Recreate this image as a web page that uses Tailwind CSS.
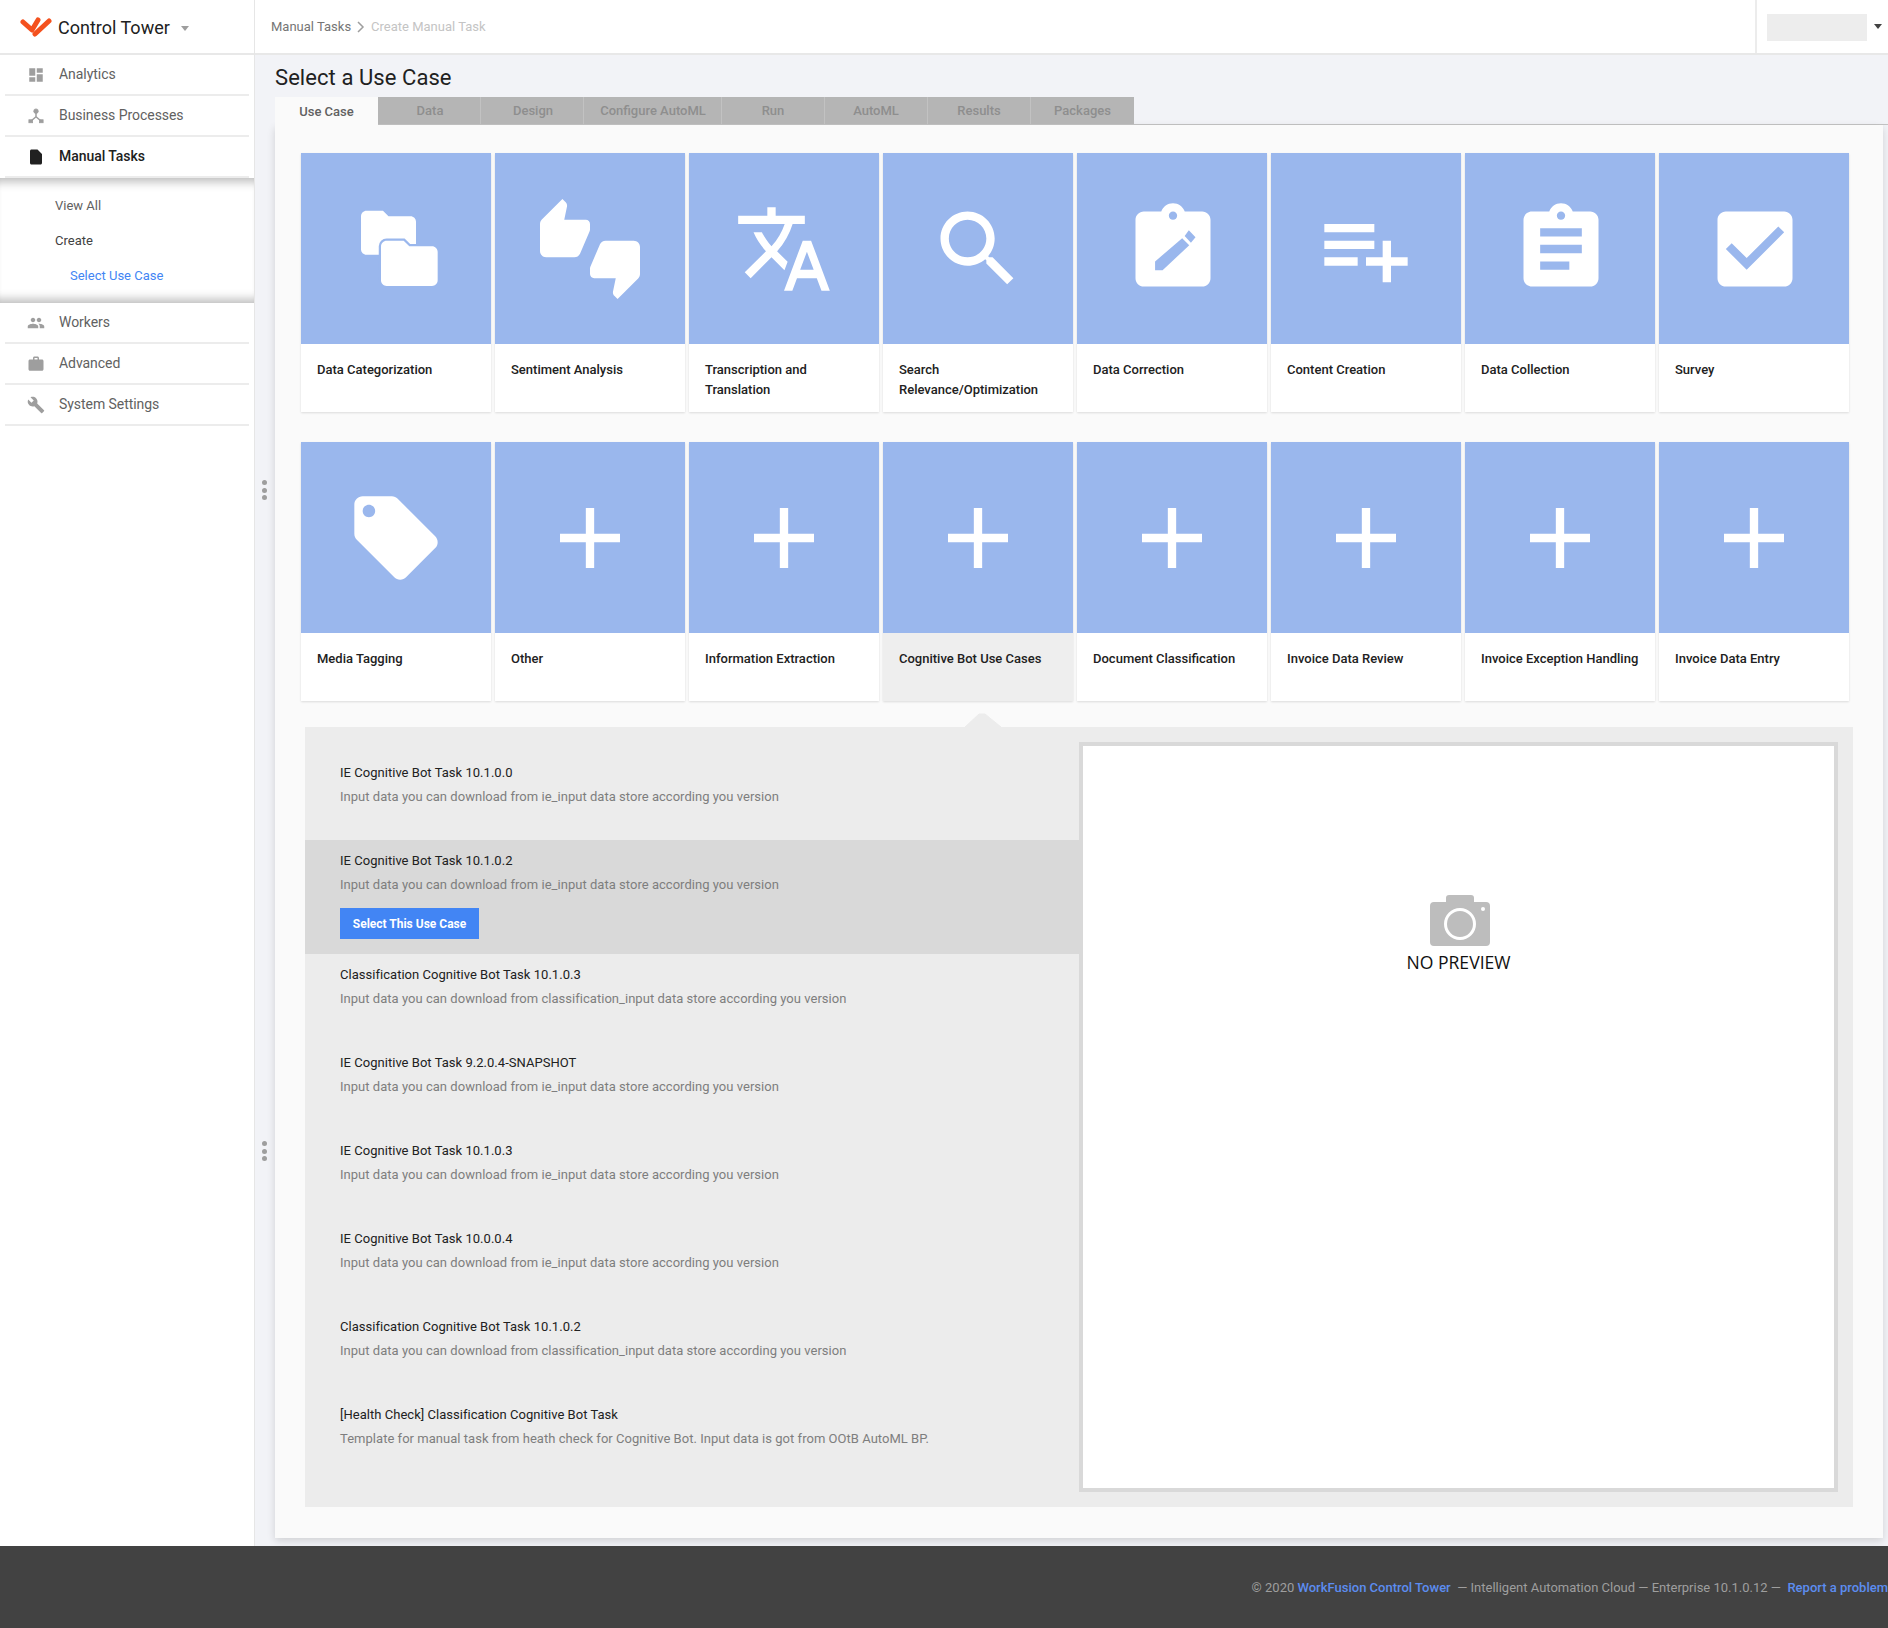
<!DOCTYPE html>
<html lang="en">
  <head>
    <meta charset="UTF-8" />
    <title>Select a Use Case</title>
    <script src="https://cdn.jsdelivr.net/npm/@tailwindcss/browser@4"></script>
  </head>
  <body class="w-[1888px] h-[1628px] overflow-hidden bg-[#f2f3f7] font-['Roboto',sans-serif] text-[13px] text-[#212121]">
    <div class="flex h-[1546px]">
      <!-- Sidebar -->
      <aside class="w-[255px] shrink-0 bg-white border-r border-[#e6e6e6]">
        <div class="h-[55px] border-b-2 border-[#e8e8e8] flex items-center pl-[20px]">
          <svg class="w-[32px] h-[22px] mt-[3px]" viewBox="0 0 32 22" fill="none" stroke="#f4511e" stroke-width="5" stroke-linecap="round" stroke-linejoin="round">
            <path d="M3 5 L12 13 L18 3" />
            <path d="M15 17 L29 4" />
          </svg>
          <span class="ml-[6px] mt-[2px] text-[18px] leading-none text-[#212121]">Control Tower</span>
          <span class="ml-[11px] mt-[3px] w-0 h-0 border-x-[4.5px] border-x-transparent border-t-[5px] border-t-[#9e9e9e]"></span>
        </div>

        <nav class="text-[14px] tracking-[-0.05px] text-[#616161]">
          <a class="mx-[5px] h-[41px] flex items-center border-b-2 border-[#ececec]">
            <svg class="w-[18px] h-[18px] ml-[22px] mr-[14px] fill-[#9e9e9e]" viewBox="0 0 24 24"><path d="M3 13h8V3H3v10zm0 8h8v-6H3v6zm10 0h8V11h-8v10zm0-18v6h8V3h-8z" /></svg>
            Analytics
          </a>
          <a class="mx-[5px] h-[41px] flex items-center border-b-2 border-[#ececec]">
            <svg class="w-[18px] h-[18px] ml-[22px] mr-[14px]" viewBox="0 0 24 24" fill="#9e9e9e" stroke="#9e9e9e">
              <circle cx="12" cy="5.5" r="3" />
              <path d="M12 7v6M12 13l-7 6M12 13l7 6" fill="none" stroke-width="2" />
              <rect x="2.5" y="17" width="5" height="4" />
              <rect x="16.5" y="17" width="5" height="4" />
            </svg>
            Business Processes
          </a>
          <a class="mx-[5px] h-[41px] flex items-center border-b-2 border-[#ececec] font-medium text-[#212121]">
            <svg class="w-[18px] h-[18px] ml-[22px] mr-[14px] fill-[#212121]" viewBox="0 0 24 24"><path d="M6 2c-1.1 0-1.99.9-1.99 2L4 20c0 1.1.89 2 1.99 2H18c1.1 0 2-.9 2-2V8l-6-6H6z" /></svg>
            Manual Tasks
          </a>
          <div class="h-[125px] flex flex-col shadow-[inset_0_12px_10px_-8px_rgba(0,0,0,0.26),inset_0_-12px_10px_-8px_rgba(0,0,0,0.26)] text-[13px] tracking-normal pt-[10px]">
            <a class="h-[35px] flex items-center pl-[55px] text-[#616161]">View All</a>
            <a class="h-[35px] flex items-center pl-[55px] text-[#424242]">Create</a>
            <a class="h-[35px] flex items-center pl-[70px] text-[#4285f4]">Select Use Case</a>
          </div>
          <a class="mx-[5px] h-[41px] flex items-center border-b-2 border-[#ececec]">
            <svg class="w-[18px] h-[18px] ml-[22px] mr-[14px] fill-[#9e9e9e]" viewBox="0 0 24 24"><path d="M16 11c1.66 0 2.99-1.34 2.99-3S17.66 5 16 5c-1.66 0-3 1.34-3 3s1.34 3 3 3zm-8 0c1.66 0 2.99-1.34 2.99-3S9.66 5 8 5C6.34 5 5 6.34 5 8s1.34 3 3 3zm0 2c-2.33 0-7 1.17-7 3.5V19h14v-2.5c0-2.33-4.67-3.5-7-3.5zm8 0c-.29 0-.62.02-.97.05 1.16.84 1.97 1.97 1.97 3.45V19h6v-2.5c0-2.33-4.67-3.5-7-3.5z" /></svg>
            Workers
          </a>
          <a class="mx-[5px] h-[41px] flex items-center border-b-2 border-[#ececec]">
            <svg class="w-[18px] h-[18px] ml-[22px] mr-[14px] fill-[#9e9e9e]" viewBox="0 0 24 24"><path d="M20 6h-4V4c0-1.11-.89-2-2-2h-4c-1.11 0-2 .89-2 2v2H4c-1.11 0-1.99.89-1.99 2L2 19c0 1.11.89 2 2 2h16c1.11 0 2-.89 2-2V8c0-1.11-.89-2-2-2zm-6 0h-4V4h4v2z" /></svg>
            Advanced
          </a>
          <a class="mx-[5px] h-[41px] flex items-center border-b-2 border-[#ececec]">
            <svg class="w-[18px] h-[18px] ml-[22px] mr-[14px] fill-[#9e9e9e]" viewBox="0 0 24 24"><path d="M22.7 19l-9.1-9.1c.9-2.3.4-5-1.5-6.9-2-2-5-2.4-7.4-1.3L9 6 6 9 1.6 4.7C.4 7.1.9 10.1 2.9 12.1c1.9 1.9 4.6 2.4 6.9 1.5l9.1 9.1c.4.4 1 .4 1.4 0l2.3-2.3c.5-.4.5-1.1.1-1.4z" /></svg>
            System Settings
          </a>
        </nav>
      </aside>

      <div class="relative flex-1 flex flex-col min-w-0">
        <!-- Top bar -->
        <header class="h-[55px] shrink-0 bg-white border-b-2 border-[#e8e8e8] flex items-center">
          <div class="pl-[16px] flex items-center flex-1">
            <span class="text-[#757575]">Manual Tasks</span>
            <svg class="w-[8px] h-[12px] mx-[6px]" viewBox="0 0 8 12" fill="none" stroke="#9e9e9e" stroke-width="1.5"><path d="M1 1l5 5-5 5" /></svg>
            <span class="text-[#c4c4c4]">Create Manual Task</span>
          </div>
          <div class="w-[133px] h-full border-l-2 border-[#ececec] flex items-center pl-[10px]">
            <div class="w-[100px] h-[27px] bg-[#ededed] mt-[2px]"></div>
            <span class="ml-[7px] w-0 h-0 border-x-[4px] border-x-transparent border-t-[5px] border-t-[#424242]"></span>
          </div>
        </header>

        <!-- Drag handles -->
        <div class="absolute left-[7px] top-[480px] flex flex-col gap-[2.5px]">
          <span class="w-[5px] h-[5px] rounded-full bg-[#9e9e9e]"></span>
          <span class="w-[5px] h-[5px] rounded-full bg-[#9e9e9e]"></span>
          <span class="w-[5px] h-[5px] rounded-full bg-[#9e9e9e]"></span>
        </div>
        <div class="absolute left-[7px] top-[1141px] flex flex-col gap-[2.5px]">
          <span class="w-[5px] h-[5px] rounded-full bg-[#9e9e9e]"></span>
          <span class="w-[5px] h-[5px] rounded-full bg-[#9e9e9e]"></span>
          <span class="w-[5px] h-[5px] rounded-full bg-[#9e9e9e]"></span>
        </div>

        <main class="flex-1 pl-[20px]">
          <h1 class="h-[42px] pt-[4px] flex items-center text-[22px] tracking-[0.07px] leading-none text-[#212121]">Select a Use Case</h1>

          <!-- Tabs -->
          <div class="flex h-[28px] border-b border-[#c4c4c4] text-[13px] font-medium">
            <div class="w-[103px] h-[28px] pt-[1px] bg-[#fafafa] flex items-center justify-center text-[#616161]">Use Case</div>
            <div class="w-[103px] pt-[1px] pl-[2px] bg-[#b5b5b5] border-r border-[#c2c2c2] flex items-center justify-center text-[#8e8e8e]">Data</div>
            <div class="w-[103px] pt-[1px] pl-[2px] bg-[#b5b5b5] border-r border-[#c2c2c2] flex items-center justify-center text-[#8e8e8e]">Design</div>
            <div class="w-[138px] pt-[1px] pl-[1px] bg-[#b5b5b5] border-r border-[#c2c2c2] flex items-center justify-center text-[#8e8e8e]">Configure AutoML</div>
            <div class="w-[103px] pt-[1px] bg-[#b5b5b5] border-r border-[#c2c2c2] flex items-center justify-center text-[#8e8e8e]">Run</div>
            <div class="w-[103px] pt-[1px] bg-[#b5b5b5] border-r border-[#c2c2c2] flex items-center justify-center text-[#8e8e8e]">AutoML</div>
            <div class="w-[103px] pt-[1px] bg-[#b5b5b5] border-r border-[#c2c2c2] flex items-center justify-center text-[#8e8e8e]">Results</div>
            <div class="w-[103px] pt-[1px] bg-[#b5b5b5] flex items-center justify-center text-[#8e8e8e]">Packages</div>
          </div>

          <!-- Panel -->
          <section class="w-[1608px] h-[1413px] bg-[#fafafa] pt-[28px] pl-[26px] shadow-[0_3px_8px_rgba(0,0,0,0.14)]">
            <div class="w-[1548px] grid grid-cols-8 gap-x-[4px] gap-y-[30px] font-medium">
              <div class="bg-white h-[259px] shadow-[0_1px_2px_rgba(0,0,0,0.12)]">
                <div class="h-[191px] bg-[#9ab7ed] flex items-center justify-center">
                  <svg class="w-[100px] h-[100px]" viewBox="0 0 24 24" fill="#fff">
                    <path transform="translate(2.28 .16) scale(.66)" d="M10 4H4c-1.1 0-1.99.9-1.99 2L2 18c0 1.1.9 2 2 2h16c1.1 0 2-.9 2-2V8c0-1.1-.9-2-2-2h-8l-2-2z" />
                    <path transform="translate(7.04 7.28) scale(.68)" stroke="#9ab7ed" stroke-width="1.6" paint-order="stroke" d="M10 4H4c-1.1 0-1.99.9-1.99 2L2 18c0 1.1.9 2 2 2h16c1.1 0 2-.9 2-2V8c0-1.1-.9-2-2-2h-8l-2-2z" />
                  </svg>
                </div>
                <p class="px-[16px] pt-[16px] leading-[20px]">Data Categorization</p>
              </div>
              <div class="bg-white h-[259px] shadow-[0_1px_2px_rgba(0,0,0,0.12)]">
                <div class="h-[191px] bg-[#9ab7ed] flex items-center justify-center">
                  <svg class="w-[100px] h-[100px] fill-white" viewBox="0 0 24 24"><path d="M12 6c0-.55-.45-1-1-1H5.82l.66-3.18.02-.23c0-.31-.13-.59-.33-.8L5.38 0 .44 4.94C.17 5.21 0 5.59 0 6v6.5c0 .83.67 1.5 1.5 1.5h6.75c.62 0 1.15-.38 1.38-.91l2.26-5.29c.07-.17.11-.36.11-.55V6zm10.5 4h-6.75c-.62 0-1.15.38-1.38.91l-2.26 5.29c-.07.17-.11.36-.11.55V18c0 .55.45 1 1 1h5.18l-.66 3.18-.02.24c0 .31.13.59.33.8l.79.78 4.94-4.94c.27-.27.44-.65.44-1.06v-6.5c0-.83-.67-1.5-1.5-1.5z" /></svg>
                </div>
                <p class="px-[16px] pt-[16px] leading-[20px]">Sentiment Analysis</p>
              </div>
              <div class="bg-white h-[259px] shadow-[0_1px_2px_rgba(0,0,0,0.12)]">
                <div class="h-[191px] bg-[#9ab7ed] flex items-center justify-center">
                  <svg class="w-[100px] h-[100px] fill-white" viewBox="0 0 24 24"><path d="M12.87 15.07l-2.54-2.51.03-.03c1.74-1.94 2.98-4.17 3.71-6.53H17V4h-7V2H8v2H1v1.99h11.17C11.5 7.92 10.44 9.75 9 11.35 8.07 10.32 7.3 9.19 6.69 8h-2c.73 1.63 1.73 3.17 2.98 4.56l-5.09 5.02L4 19l5-5 3.11 3.11.76-2.04zM18.5 10h-2L12 22h2l1.12-3h4.75L21 22h2l-4.5-12zm-2.62 7l1.62-4.33L19.12 17h-3.24z" /></svg>
                </div>
                <p class="px-[16px] pt-[16px] leading-[20px]">Transcription and Translation</p>
              </div>
              <div class="bg-white h-[259px] shadow-[0_1px_2px_rgba(0,0,0,0.12)]">
                <div class="h-[191px] bg-[#9ab7ed] flex items-center justify-center">
                  <svg class="w-[100px] h-[100px] fill-white" viewBox="0 0 24 24"><path d="M15.5 14h-.79l-.28-.27C15.41 12.59 16 11.11 16 9.5 16 5.91 13.09 3 9.5 3S3 5.91 3 9.5 5.91 16 9.5 16c1.61 0 3.09-.59 4.23-1.57l.27.28v.79l5 4.99L20.49 19l-4.99-5zm-6 0C7.01 14 5 11.99 5 9.5S7.01 5 9.5 5 14 7.01 14 9.5 11.99 14 9.5 14z" /></svg>
                </div>
                <p class="px-[16px] pt-[16px] leading-[20px]">Search Relevance/Optimization</p>
              </div>
              <div class="bg-white h-[259px] shadow-[0_1px_2px_rgba(0,0,0,0.12)]">
                <div class="h-[191px] bg-[#9ab7ed] flex items-center justify-center">
                  <svg class="ml-[1px] w-[100px] h-[100px]" viewBox="0 0 24 24">
                    <path fill="#fff" d="M19 3h-4.18C14.4 1.84 13.3 1 12 1c-1.3 0-2.4.84-2.82 2H5c-1.1 0-2 .9-2 2v14c0 1.1.9 2 2 2h14c1.1 0 2-.9 2-2V5c0-1.1-.9-2-2-2zm-7 0c.55 0 1 .45 1 1s-.45 1-1 1-1-.45-1-1 .45-1 1-1z" />
                    <path fill="#9ab7ed" d="M7.7 17.1V15l6.5-5.6 1.7 1.7-6.4 6zM14.8 8.9l1-1.4 1.6 1.7-1.1 1.3z" />
                  </svg>
                </div>
                <p class="px-[16px] pt-[16px] leading-[20px]">Data Correction</p>
              </div>
              <div class="bg-white h-[259px] shadow-[0_1px_2px_rgba(0,0,0,0.12)]">
                <div class="h-[191px] bg-[#9ab7ed] flex items-center justify-center">
                  <svg class="w-[100px] h-[100px] fill-white" viewBox="0 0 24 24"><path d="M14 10H2v2h12v-2zm0-4H2v2h12V6zm4 8v-4h-2v4h-4v2h4v4h2v-4h4v-2h-4zM2 16h8v-2H2v2z" /></svg>
                </div>
                <p class="px-[16px] pt-[16px] leading-[20px]">Content Creation</p>
              </div>
              <div class="bg-white h-[259px] shadow-[0_1px_2px_rgba(0,0,0,0.12)]">
                <div class="h-[191px] bg-[#9ab7ed] flex items-center justify-center">
                  <svg class="ml-[1px] w-[100px] h-[100px] fill-white" viewBox="0 0 24 24"><path d="M19 3h-4.18C14.4 1.84 13.3 1 12 1c-1.3 0-2.4.84-2.82 2H5c-1.1 0-2 .9-2 2v14c0 1.1.9 2 2 2h14c1.1 0 2-.9 2-2V5c0-1.1-.9-2-2-2zm-7 0c.55 0 1 .45 1 1s-.45 1-1 1-1-.45-1-1 .45-1 1-1zm2 14H7v-2h7v2zm3-4H7v-2h10v2zm0-4H7V7h10v2z" /></svg>
                </div>
                <p class="px-[16px] pt-[16px] leading-[20px]">Data Collection</p>
              </div>
              <div class="bg-white h-[259px] shadow-[0_1px_2px_rgba(0,0,0,0.12)]">
                <div class="h-[191px] bg-[#9ab7ed] flex items-center justify-center">
                  <svg class="ml-[1px] w-[100px] h-[100px] fill-white" viewBox="0 0 24 24"><path d="M19 3H5c-1.1 0-2 .9-2 2v14c0 1.1.9 2 2 2h14c1.1 0 2-.9 2-2V5c0-1.1-.9-2-2-2zm-9 14l-5-5 1.41-1.41L10 14.17l7.59-7.59L19 8l-9 9z" /></svg>
                </div>
                <p class="px-[16px] pt-[16px] leading-[20px]">Survey</p>
              </div>

              <div class="bg-white h-[259px] shadow-[0_1px_2px_rgba(0,0,0,0.12)]">
                <div class="h-[191px] bg-[#9ab7ed] flex items-center justify-center">
                  <svg class="w-[100px] h-[100px] fill-white" viewBox="0 0 24 24"><path d="M21.41 11.58l-9-9C12.05 2.22 11.55 2 11 2H4c-1.1 0-2 .9-2 2v7c0 .55.22 1.05.59 1.42l9 9c.36.36.86.58 1.41.58.55 0 1.05-.22 1.41-.59l7-7c.37-.36.59-.86.59-1.41 0-.55-.23-1.06-.59-1.42zM5.5 7C4.67 7 4 6.33 4 5.5S4.67 4 5.5 4 7 4.67 7 5.5 6.33 7 5.5 7z" /></svg>
                </div>
                <p class="px-[16px] pt-[16px] leading-[20px]">Media Tagging</p>
              </div>
              <div class="bg-white h-[259px] shadow-[0_1px_2px_rgba(0,0,0,0.12)]">
                <div class="h-[191px] bg-[#9ab7ed] flex items-center justify-center">
                  <svg class="w-[100px] h-[100px] fill-white" viewBox="0 0 24 24"><path d="M19.2 13H13v6.2h-2V13H4.8v-2H11V4.8h2V11h6.2v2z" /></svg>
                </div>
                <p class="px-[16px] pt-[16px] leading-[20px]">Other</p>
              </div>
              <div class="bg-white h-[259px] shadow-[0_1px_2px_rgba(0,0,0,0.12)]">
                <div class="h-[191px] bg-[#9ab7ed] flex items-center justify-center">
                  <svg class="w-[100px] h-[100px] fill-white" viewBox="0 0 24 24"><path d="M19.2 13H13v6.2h-2V13H4.8v-2H11V4.8h2V11h6.2v2z" /></svg>
                </div>
                <p class="px-[16px] pt-[16px] leading-[20px]">Information Extraction</p>
              </div>
              <div class="bg-[#eeeeee] h-[259px] shadow-[0_1px_2px_rgba(0,0,0,0.12)]">
                <div class="h-[191px] bg-[#9ab7ed] flex items-center justify-center">
                  <svg class="w-[100px] h-[100px] fill-white" viewBox="0 0 24 24"><path d="M19.2 13H13v6.2h-2V13H4.8v-2H11V4.8h2V11h6.2v2z" /></svg>
                </div>
                <p class="px-[16px] pt-[16px] leading-[20px]">Cognitive Bot Use Cases</p>
              </div>
              <div class="bg-white h-[259px] shadow-[0_1px_2px_rgba(0,0,0,0.12)]">
                <div class="h-[191px] bg-[#9ab7ed] flex items-center justify-center">
                  <svg class="w-[100px] h-[100px] fill-white" viewBox="0 0 24 24"><path d="M19.2 13H13v6.2h-2V13H4.8v-2H11V4.8h2V11h6.2v2z" /></svg>
                </div>
                <p class="px-[16px] pt-[16px] leading-[20px]">Document Classification</p>
              </div>
              <div class="bg-white h-[259px] shadow-[0_1px_2px_rgba(0,0,0,0.12)]">
                <div class="h-[191px] bg-[#9ab7ed] flex items-center justify-center">
                  <svg class="w-[100px] h-[100px] fill-white" viewBox="0 0 24 24"><path d="M19.2 13H13v6.2h-2V13H4.8v-2H11V4.8h2V11h6.2v2z" /></svg>
                </div>
                <p class="px-[16px] pt-[16px] leading-[20px]">Invoice Data Review</p>
              </div>
              <div class="bg-white h-[259px] shadow-[0_1px_2px_rgba(0,0,0,0.12)]">
                <div class="h-[191px] bg-[#9ab7ed] flex items-center justify-center">
                  <svg class="w-[100px] h-[100px] fill-white" viewBox="0 0 24 24"><path d="M19.2 13H13v6.2h-2V13H4.8v-2H11V4.8h2V11h6.2v2z" /></svg>
                </div>
                <p class="px-[16px] pt-[16px] leading-[20px]">Invoice Exception Handling</p>
              </div>
              <div class="bg-white h-[259px] shadow-[0_1px_2px_rgba(0,0,0,0.12)]">
                <div class="h-[191px] bg-[#9ab7ed] flex items-center justify-center">
                  <svg class="w-[100px] h-[100px] fill-white" viewBox="0 0 24 24"><path d="M19.2 13H13v6.2h-2V13H4.8v-2H11V4.8h2V11h6.2v2z" /></svg>
                </div>
                <p class="px-[16px] pt-[16px] leading-[20px]">Invoice Data Entry</p>
              </div>
            </div>

            <!-- Use case list and preview -->
            <div class="relative mt-[26px] ml-[4px] w-[1548px] h-[780px] bg-[#ececec] flex">
              <svg class="absolute left-[659px] -top-[14px] w-[38px] h-[14px]" viewBox="0 0 38 14" fill="#ececec" stroke="#ececec" stroke-linejoin="round"><path d="M1 14 L15 1 H21 L37 14 Z" /></svg>
              <div class="w-[774px] pt-[25px] tracking-[0.03px]">
                <div class="h-[88px] pl-[35px] pt-[11px]">
                  <p class="leading-[20px]">IE Cognitive Bot Task 10.1.0.0</p>
                  <p class="mt-[4px] leading-[20px] text-[#7e7e7e]">Input data you can download from ie_input data store according you version</p>
                </div>
                <div class="h-[114px] pl-[35px] pt-[11px] bg-[#d9d9d9]">
                  <p class="leading-[20px]">IE Cognitive Bot Task 10.1.0.2</p>
                  <p class="mt-[4px] leading-[20px] text-[#7e7e7e]">Input data you can download from ie_input data store according you version</p>
                  <button class="mt-[13px] w-[139px] h-[31px] bg-[#4285f4] text-white text-[12px] tracking-normal font-bold">Select This Use Case</button>
                </div>
                <div class="h-[88px] pl-[35px] pt-[11px]">
                  <p class="leading-[20px]">Classification Cognitive Bot Task 10.1.0.3</p>
                  <p class="mt-[4px] leading-[20px] text-[#7e7e7e]">Input data you can download from classification_input data store according you version</p>
                </div>
                <div class="h-[88px] pl-[35px] pt-[11px]">
                  <p class="leading-[20px]">IE Cognitive Bot Task 9.2.0.4-SNAPSHOT</p>
                  <p class="mt-[4px] leading-[20px] text-[#7e7e7e]">Input data you can download from ie_input data store according you version</p>
                </div>
                <div class="h-[88px] pl-[35px] pt-[11px]">
                  <p class="leading-[20px]">IE Cognitive Bot Task 10.1.0.3</p>
                  <p class="mt-[4px] leading-[20px] text-[#7e7e7e]">Input data you can download from ie_input data store according you version</p>
                </div>
                <div class="h-[88px] pl-[35px] pt-[11px]">
                  <p class="leading-[20px]">IE Cognitive Bot Task 10.0.0.4</p>
                  <p class="mt-[4px] leading-[20px] text-[#7e7e7e]">Input data you can download from ie_input data store according you version</p>
                </div>
                <div class="h-[88px] pl-[35px] pt-[11px]">
                  <p class="leading-[20px]">Classification Cognitive Bot Task 10.1.0.2</p>
                  <p class="mt-[4px] leading-[20px] text-[#7e7e7e]">Input data you can download from classification_input data store according you version</p>
                </div>
                <div class="h-[88px] pl-[35px] pt-[11px]">
                  <p class="leading-[20px]">[Health Check] Classification Cognitive Bot Task</p>
                  <p class="mt-[4px] leading-[20px] text-[#7e7e7e]">Template for manual task from heath check for Cognitive Bot. Input data is got from OOtB AutoML BP.</p>
                </div>
              </div>
              <div class="mt-[15px] w-[759px] h-[750px] bg-white border-4 border-[#d9d9d9] flex flex-col items-center pt-[149px]">
                <svg class="ml-[2px] w-[60px] h-[51px]" viewBox="0 0 60 51">
                  <path fill="#bdbdbd" d="M16 7V3a3 3 0 0 1 3-3h22a3 3 0 0 1 3 3v4h12a4 4 0 0 1 4 4v36a4 4 0 0 1-4 4H4a4 4 0 0 1-4-4V11a4 4 0 0 1 4-4z" />
                  <circle cx="30" cy="29" r="14.5" fill="none" stroke="#fff" stroke-width="3" />
                  <circle cx="53" cy="14" r="2" fill="#fff" />
                </svg>
                <p class="mt-[4px] font-['Open_Sans',sans-serif] text-[17.6px] leading-[24px] text-[#111111]">NO PREVIEW</p>
              </div>
            </div>
          </section>
        </main>
      </div>
    </div>

    <footer class="h-[82px] pt-[2px] bg-[#424242] flex items-center justify-end text-[#9e9e9e] text-[13px]">
      <span>© 2020 <a class="font-medium text-[#5c8df0]">WorkFusion Control Tower</a>&nbsp; — Intelligent Automation Cloud — Enterprise 10.1.0.12 —&nbsp; <a class="font-medium text-[#5c8df0]">Report a problem</a></span>
    </footer>
  </body>
</html>
